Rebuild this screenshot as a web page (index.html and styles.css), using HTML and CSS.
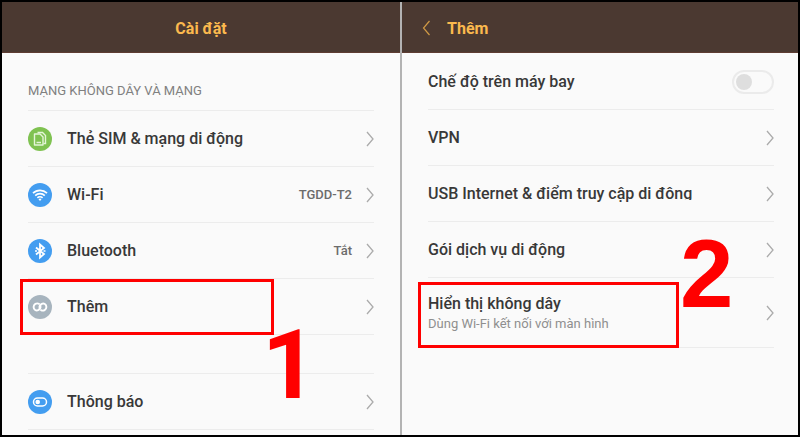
FILE: index.html
```html
<!DOCTYPE html>
<html lang="vi">
<head>
<meta charset="utf-8">
<meta name="viewport" content="width=device-width, initial-scale=1">
<title>Cài đặt</title>
<link rel="stylesheet" href="styles.css">
</head>
<body>

<svg class="defs" aria-hidden="true">
  <symbol id="arrow" viewBox="0 0 8 16">
    <path d="M1 1l6 7-6 7" fill="none" stroke="currentColor" stroke-width="1.3"/>
  </symbol>
</svg>

<main class="screens">
  <section class="screen">
    <header class="bar bar-center">
      <h1>Cài đặt</h1>
    </header>
    <div class="content content-main">
      <h2>MẠNG KHÔNG DÂY VÀ MẠNG</h2>
      <a class="row" href="#sim">
        <svg class="icon" viewBox="0 0 24 24">
          <circle cx="12" cy="12" r="12" fill="#7fc251"/>
          <path d="M9.500 5.500h5l3 3v8h-2" fill="none" stroke="#e4f5d8" stroke-width="1.400"/>
          <path d="M6.500 7h5.500l3 3v8H6.500z" fill="#7fc251" stroke="#e4f5d8" stroke-width="1.400" stroke-linejoin="round"/>
          <path d="M8.500 15.500h4.500" stroke="#e4f5d8" stroke-width="1.500"/>
        </svg>
        <span class="label">Thẻ SIM &amp; mạng di động</span>
        <svg class="arrow"><use href="#arrow"/></svg>
      </a>
      <a class="row" href="#wifi">
        <svg class="icon" viewBox="0 0 24 24">
          <circle cx="12" cy="12" r="12" fill="#439df0"/>
          <g fill="none" stroke="#fff" stroke-width="1.700">
            <path d="M5 10.200a10 10 0 0 1 14 0"/>
            <path d="M7.200 12.600a6.800 6.800 0 0 1 9.600 0"/>
            <path d="M9.400 14.900a3.700 3.700 0 0 1 5.200 0"/>
          </g>
          <path d="M10.500 16.300a2 2 0 0 1 3 0L12 18z" fill="#fff"/>
        </svg>
        <span class="label">Wi-Fi</span>
        <span class="value">TGDD-T2</span>
        <svg class="arrow"><use href="#arrow"/></svg>
      </a>
      <a class="row" href="#bluetooth">
        <svg class="icon" viewBox="0 0 24 24">
          <circle cx="12" cy="12" r="12" fill="#439df0"/>
          <path d="M8 8.500l8 6.500-4 3.500v-13L16 9l-8 6.500" fill="none" stroke="#fff" stroke-width="1.800"/>
          <path d="M7 12h2M15.500 12h2" stroke="#fff" stroke-width="1.600"/>
        </svg>
        <span class="label">Bluetooth</span>
        <span class="value">Tắt</span>
        <svg class="arrow"><use href="#arrow"/></svg>
      </a>
      <a class="row" href="#more">
        <svg class="icon" viewBox="0 0 24 24">
          <circle cx="12" cy="12" r="12" fill="#a7b4be"/>
          <g fill="none" stroke="#fff" stroke-width="1.900" stroke-linecap="round">
            <path d="M11 8.800C8.500 7.600 5.600 9.200 5.600 12s2.600 4.200 4.600 3.200c1.800-.9 2.600-2.400 2.200-4.200"/>
            <path d="M13 15.200c2.500 1.200 5.400-.4 5.400-3.200s-2.600-4.200-4.600-3.200c-1.800.9-2.600 2.400-2.200 4.200"/>
          </g>
        </svg>
        <span class="label">Thêm</span>
        <svg class="arrow"><use href="#arrow"/></svg>
        <span class="frame"></span>
        <b class="step step-one">1</b>
      </a>
      <div class="gap"></div>
      <a class="row" href="#notifications">
        <svg class="icon" viewBox="0 0 24 24">
          <circle cx="12" cy="12" r="12" fill="#439df0"/>
          <rect x="5.500" y="8" width="13" height="8" rx="4" fill="none" stroke="#fff" stroke-width="1.500"/>
          <circle cx="9.700" cy="12" r="2.300" fill="#fff"/>
        </svg>
        <span class="label">Thông báo</span>
        <svg class="arrow"><use href="#arrow"/></svg>
      </a>
    </div>
  </section>

  <section class="screen">
    <header class="bar">
      <a class="back" href="#settings" aria-label="Quay lại">
        <svg viewBox="0 0 8 16"><path d="M7 1L1 8l6 7" fill="none" stroke="currentColor" stroke-width="1.200"/></svg>
      </a>
      <h1>Thêm</h1>
    </header>
    <div class="content">
      <div class="row">
        <label class="label" for="airplane">Chế độ trên máy bay</label>
        <input class="switch" type="checkbox" id="airplane">
      </div>
      <a class="row" href="#vpn">
        <span class="label">VPN</span>
        <svg class="arrow"><use href="#arrow"/></svg>
      </a>
      <a class="row" href="#tethering">
        <span class="label">USB Internet &amp; điểm truy cập <span class="cut">di động</span></span>
        <svg class="arrow"><use href="#arrow"/></svg>
      </a>
      <a class="row" href="#plan">
        <span class="label">Gói dịch vụ di động</span>
        <svg class="arrow"><use href="#arrow"/></svg>
      </a>
      <a class="row row-tall" href="#cast">
        <span class="label">Hiển thị không dây
          <small>Dùng Wi-Fi kết nối với màn hình</small>
        </span>
        <svg class="arrow"><use href="#arrow"/></svg>
        <span class="frame"></span>
        <b class="step step-two">2</b>
      </a>
    </div>
  </section>
</main>

</body>
</html>
```
FILE: styles.css
```css
* {
  box-sizing: border-box;
}

body {
  margin: 0;
  background: #000;
  color: #383838;
  font-family: Roboto, "Noto Sans", sans-serif;
}

.defs {
  display: none;
}

/* Two phone screens side by side */
.screens {
  display: grid;
  grid-template-columns: 1fr 1fr;
  min-height: 100vh;
  border: 2px solid #000;
}

.screen {
  background: #fafafa;
}

.screen + .screen {
  border-left: 2px solid #b3b3b3;
}

/* Title bar */
.bar {
  display: flex;
  align-items: center;
  gap: 16px;
  height: 51px;
  padding: 2px 20px 0;
  background: #4b3931;
  border-bottom: 1px solid #5e3d33;
  color: #fbb94e;
}

.bar-center {
  justify-content: center;
}

h1 {
  margin: 0;
  font-size: 16px;
  font-weight: 700;
}

.back {
  display: flex;
  color: #d09a45;
}

.back svg {
  width: 9px;
  height: 16px;
}

.content {
  padding: 1px 24px 0 26px;
}

.content-main {
  padding-right: 26px;
}

h2 {
  display: flex;
  align-items: center;
  height: 57px;
  margin: 0;
  padding-top: 17px;
  border-bottom: 1px solid #ececec;
  color: #808080;
  font-size: 13px;
  font-weight: 400;
}

/* Setting rows */
.row {
  position: relative;
  display: flex;
  align-items: center;
  height: 56px;
  border-bottom: 1px solid #ececec;
  color: inherit;
  text-decoration: none;
}

.row-tall {
  height: 70px;
}

.icon {
  width: 24px;
  height: 24px;
  margin-right: 15px;
}

.label {
  flex: 1;
  font-size: 16px;
  font-weight: 500;
  line-height: 22px;
}

.label small {
  display: block;
  color: #8f8f8f;
  font-size: 13px;
  font-weight: 400;
  line-height: 18px;
}

.value {
  margin-right: 14px;
  color: #6c6c6c;
  font-size: 13px;
  font-weight: 500;
}

.arrow {
  width: 8px;
  height: 16px;
  color: #ababab;
}

.gap {
  height: 39px;
  border-bottom: 1px solid #ececec;
}

/* Lower part of the words is painted over */
.cut {
  position: relative;
}

.cut::after {
  content: "";
  position: absolute;
  left: 0;
  right: 0;
  bottom: 0;
  height: 3px;
  background: #fafafa;
}

.switch {
  appearance: none;
  display: flex;
  align-items: center;
  width: 42px;
  height: 24px;
  margin: 0;
  padding: 2px;
  border: 2px solid #ebebeb;
  border-radius: 12px;
}

.switch::before {
  content: "";
  width: 16px;
  height: 16px;
  border-radius: 50%;
  background: #dedede;
}

.switch:checked::before {
  margin-left: auto;
}

/* Red marks over the rows */
.frame {
  position: absolute;
  top: 0;
  bottom: -1px;
  left: -8px;
  width: 254px;
  border: 3px solid #f00;
}

.row-tall .frame {
  top: 4px;
  left: -10px;
  width: 261px;
}

.step {
  position: absolute;
  color: #f00;
  font-size: 96px;
  line-height: 96px;
  z-index: 1;
}

.step-one {
  top: 38px;
  left: 234px;
}

.step-two {
  top: -52px;
  left: 252px;
  font-family: "Liberation Sans", Arial, sans-serif;
}
```
